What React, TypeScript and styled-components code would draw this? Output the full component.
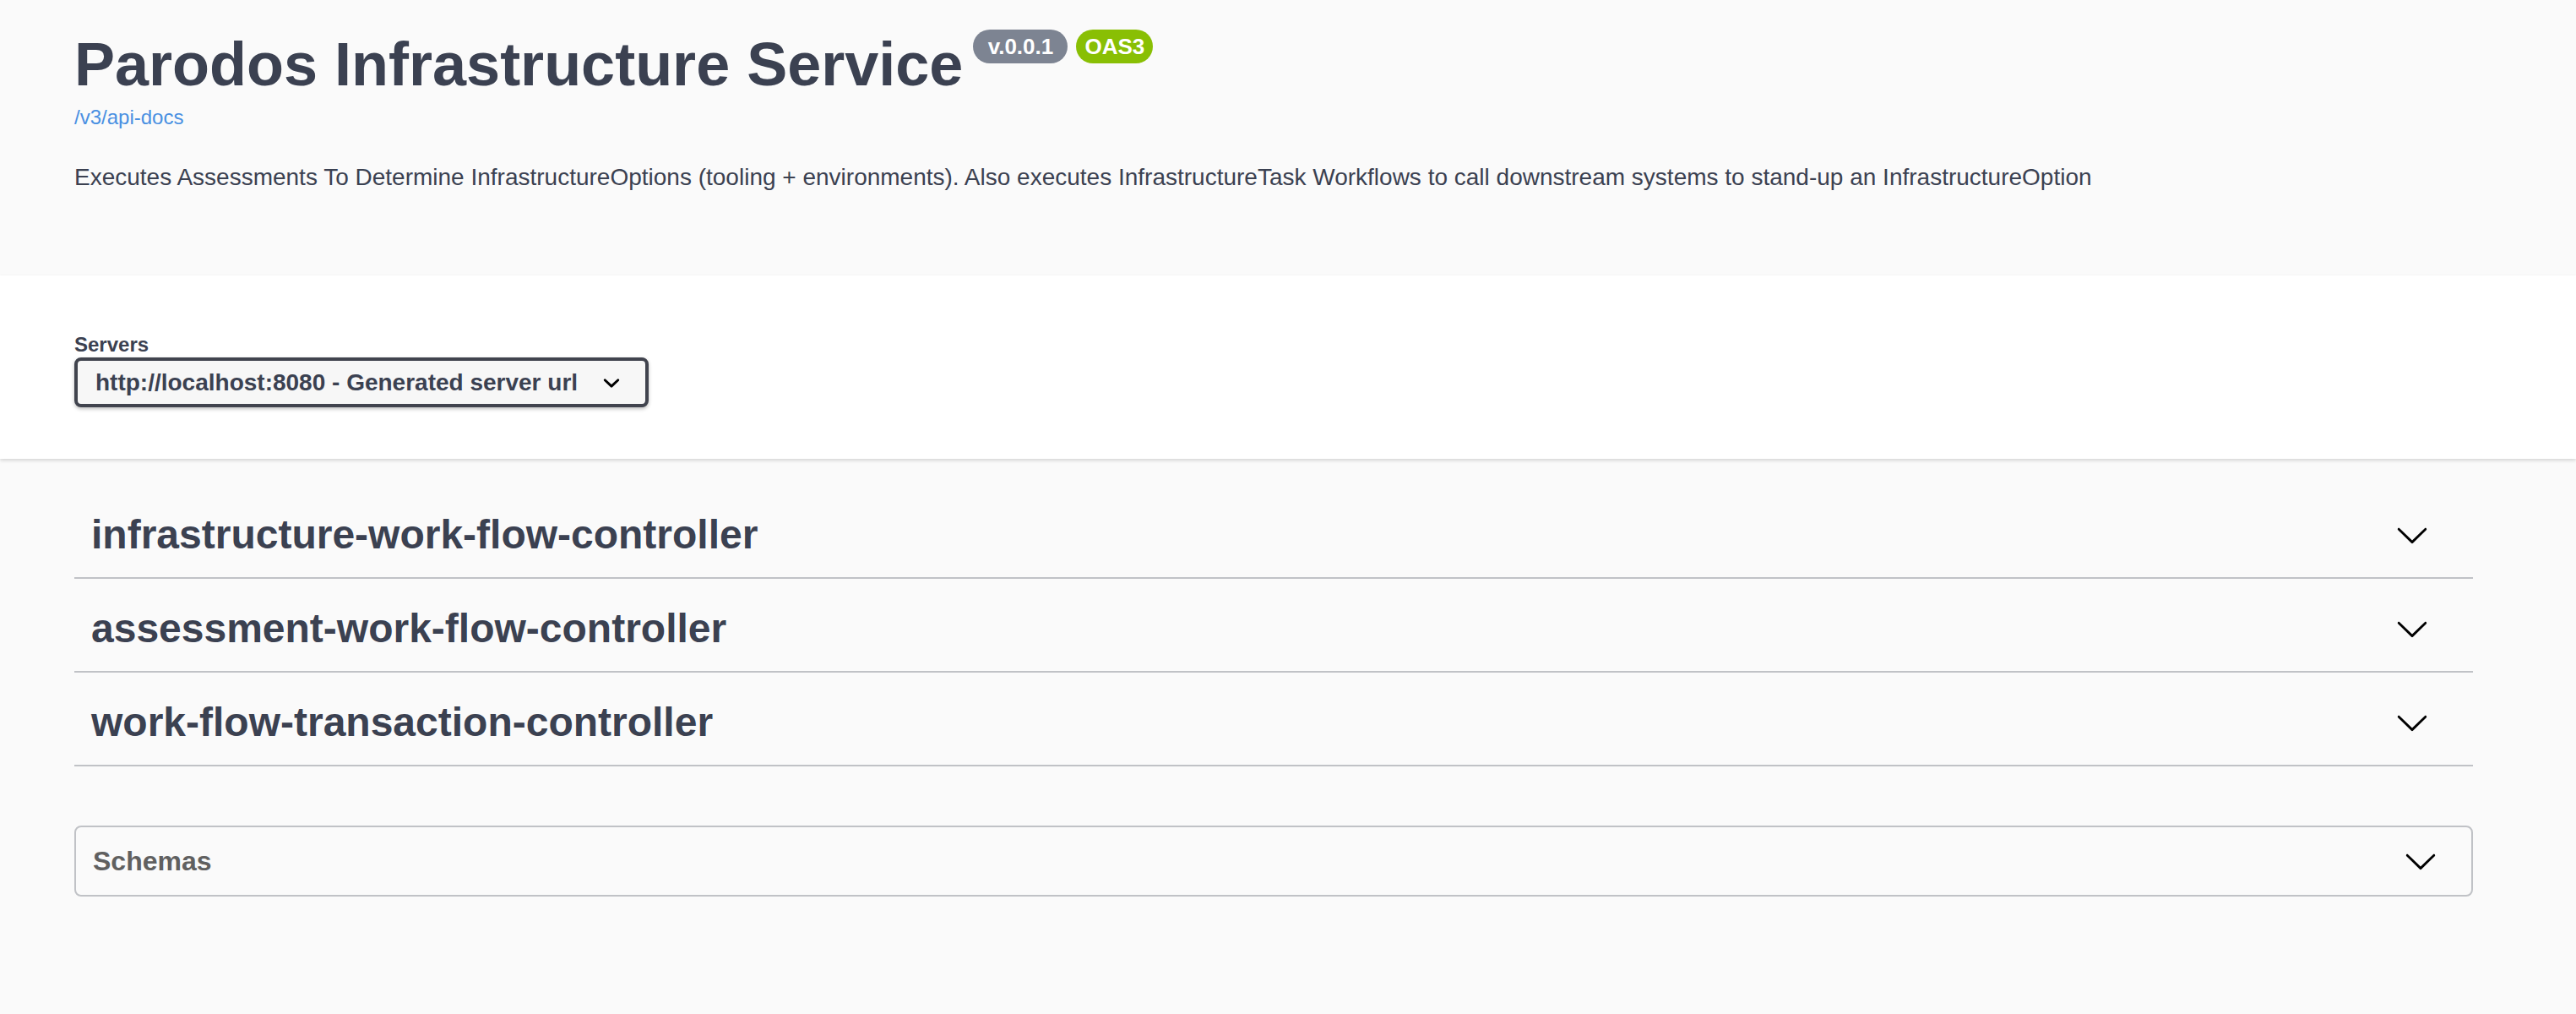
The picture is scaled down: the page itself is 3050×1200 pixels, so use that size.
import React from "react";
import styled, { createGlobalStyle } from "styled-components";

const GlobalStyle = createGlobalStyle`
  html, body {
    margin: 0;
    padding: 0;
    background: #fafafa;
  }
  body {
    font-family: "Liberation Sans", Arial, Helvetica, sans-serif;
    color: #3b4151;
  }
  * { box-sizing: border-box; }
`;

const Page = styled.div`
  min-height: 1200px;
  background: #fafafa;
`;

const Wrapper = styled.div`
  width: 2840px;
  margin: 0 0 0 88px;
`;

const InfoHeader = styled.section`
  background: #fafafa;
  padding: 34px 0 96px;
`;

const TitleRow = styled.div`
  display: flex;
  align-items: flex-start;
  gap: 10px;
`;

const Title = styled.h2`
  margin: 0 2px 0 0;
  font-size: 72px;
  line-height: 84px;
  font-weight: 700;
  color: #3b4151;
`;

const Badge = styled.span<{ $bg: string }>`
  display: inline-block;
  margin-top: 1px;
  padding: 5px 10px;
  border-radius: 57px;
  background: ${(p) => p.$bg};
  color: #fff;
  font-size: 26px;
  line-height: 30px;
  font-weight: 700;
  white-space: pre;
`;

const UrlLink = styled.a`
  display: inline-block;
  margin-top: 7px;
  font-size: 24px;
  line-height: 28px;
  color: #4990e2;
  text-decoration: none;
`;

const Description = styled.p`
  margin: 37px 0 0;
  font-size: 28px;
  line-height: 40px;
  color: #3b4151;
`;

const SchemeContainer = styled.section`
  background: #fff;
  box-shadow: 0 2px 4px 0 rgba(0, 0, 0, 0.15);
  padding: 68px 0 61px;
`;

const ServersLabel = styled.div`
  font-size: 24px;
  line-height: 28px;
  font-weight: 700;
  color: #3b4151;
  margin-bottom: 1px;
`;

const ServerSelect = styled.div`
  display: inline-flex;
  align-items: center;
  border: 4px solid #41444e;
  border-radius: 8px;
  background: #f7f7f7;
  box-shadow: 0 2px 4px 0 rgba(0, 0, 0, 0.25);
  padding: 10px 20px 10px 21px;
  font-size: 28px;
  line-height: 31px;
  font-weight: 700;
  color: #3b4151;
`;

const SelectChevron = styled.svg`
  width: 40px;
  height: 40px;
  margin: -5px 0 -5px 20px;
  flex: none;
`;

const Operations = styled.section`
  padding-top: 41px;
`;

const TagRow = styled.h3`
  display: flex;
  align-items: center;
  justify-content: space-between;
  margin: 0 0 10px;
  padding: 19px 52px 20px 20px;
  border-bottom: 2px solid rgba(59, 65, 81, 0.3);
  font-size: 48px;
  line-height: 60px;
  font-weight: 700;
  color: #3b4151;
`;

const Arrow = styled.svg`
  width: 40px;
  height: 40px;
  flex: none;
  fill: #000;
`;

const ModelsBox = styled.section`
  margin-top: 70px;
  display: flex;
  align-items: center;
  justify-content: space-between;
  border: 2px solid rgba(59, 65, 81, 0.3);
  border-radius: 8px;
  padding: 20px 40px 20px 20px;
`;

const ModelsTitle = styled.h4`
  margin: 0;
  font-size: 32px;
  line-height: 38px;
  font-weight: 700;
  color: #606060;
`;

const ArrowDown = () => (
  <Arrow viewBox="0 0 20 20" aria-hidden="true">
    <path d="M17.418 6.109c.272-.268.709-.268.979 0s.271.701 0 .969l-7.908 7.83c-.27.268-.707.268-.979 0l-7.908-7.83c-.27-.268-.27-.701 0-.969.271-.268.709-.268.979 0L10 13.25l7.418-7.141z" />
  </Arrow>
);

const tags = [
  "infrastructure-work-flow-controller",
  "assessment-work-flow-controller",
  "work-flow-transaction-controller",
];

export default function App() {
  return (
    <Page>
      <GlobalStyle />
      <InfoHeader>
        <Wrapper>
          <TitleRow>
            <Title>Parodos Infrastructure Service</Title>
            <Badge $bg="#7d8492">{" v.0.0.1 "}</Badge>
            <Badge $bg="#89bf04">OAS3</Badge>
          </TitleRow>
          <UrlLink href="#">/v3/api-docs</UrlLink>
          <Description>
            Executes Assessments To Determine InfrastructureOptions (tooling + environments). Also executes
            InfrastructureTask Workflows to call downstream systems to stand-up an InfrastructureOption
          </Description>
        </Wrapper>
      </InfoHeader>
      <SchemeContainer>
        <Wrapper>
          <ServersLabel>Servers</ServersLabel>
          <ServerSelect>
            http://localhost:8080 - Generated server url
            <SelectChevron viewBox="0 0 20 20" aria-hidden="true">
              <path
                fill="#000"
                d="M13.418 7.859a.695.695 0 01.978 0 .68.68 0 010 .969l-3.908 3.83a.697.697 0 01-.979 0l-3.908-3.83a.68.68 0 010-.969.695.695 0 01.978 0L10 11l3.418-3.141z"
              />
            </SelectChevron>
          </ServerSelect>
        </Wrapper>
      </SchemeContainer>
      <Operations>
        <Wrapper>
          {tags.map((t) => (
            <TagRow key={t}>
              <span>{t}</span>
              <ArrowDown />
            </TagRow>
          ))}
          <ModelsBox>
            <ModelsTitle>Schemas</ModelsTitle>
            <ArrowDown />
          </ModelsBox>
        </Wrapper>
      </Operations>
    </Page>
  );
}
